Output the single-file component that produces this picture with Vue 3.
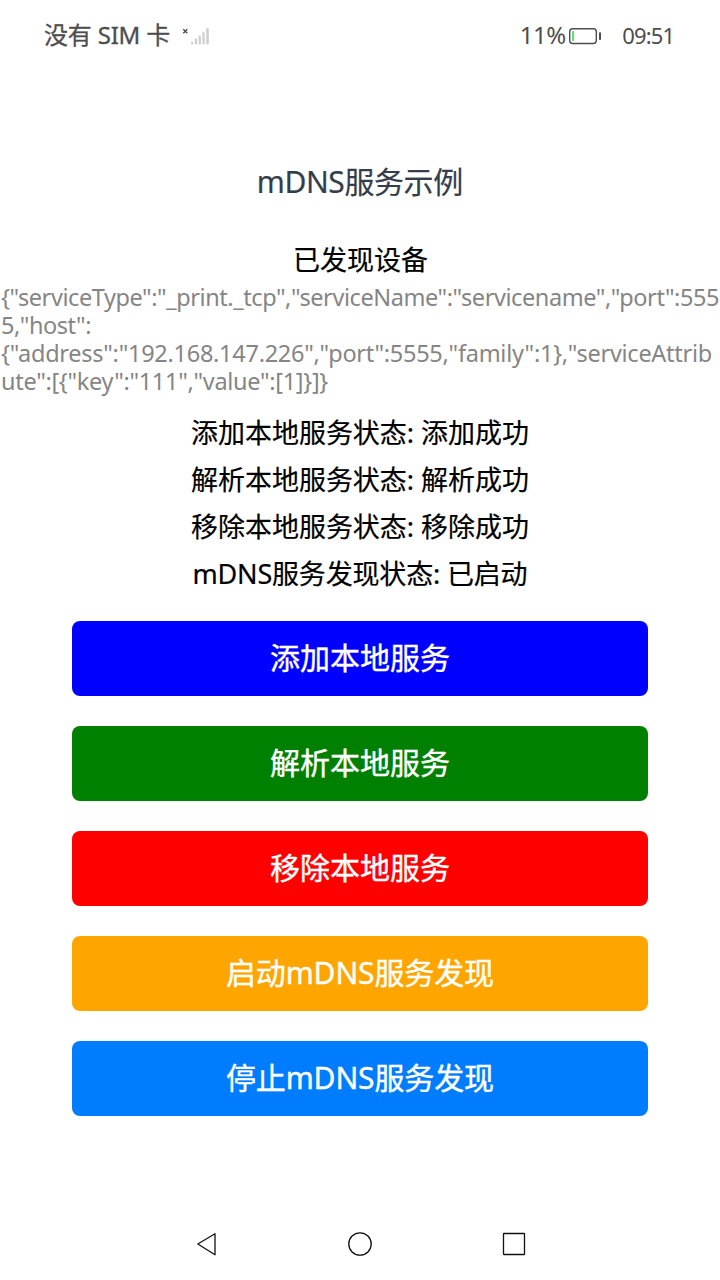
<script setup>
const jsonLines = [
  { text: '{"serviceType":"_print._tcp","serviceName":"servicename","port":555', width: 718 },
  { text: '5,"host":', width: 90 },
  { text: '{"address":"192.168.147.226","port":5555,"family":1},"serviceAttrib', width: 711 },
  { text: 'ute":[{"key":"111","value":[1]}]}', width: 327 }
]
const statuses = [
  { text: '添加本地服务状态: 添加成功', width: 338 },
  { text: '解析本地服务状态: 解析成功', width: 338 },
  { text: '移除本地服务状态: 移除成功', width: 338 },
  { text: 'mDNS服务发现状态: 已启动', width: 335 }
]
const buttons = [
  { text: '添加本地服务', color: '#0000ff', width: 180 },
  { text: '解析本地服务', color: '#008000', width: 180 },
  { text: '移除本地服务', color: '#ff0000', width: 180 },
  { text: '启动mDNS服务发现', color: '#ffa500', width: 268 },
  { text: '停止mDNS服务发现', color: '#007dff', width: 268 }
]

// Spreads the letters of a line so that it takes up the given width.
const vFit = {
  mounted(el, binding) {
    el.style.letterSpacing = '0px'
    const natural = el.getBoundingClientRect().width
    const space = (binding.value - natural) / el.textContent.length
    el.style.letterSpacing = space + 'px'
    el.style.marginRight = -space + 'px'
  }
}
</script>

<template>
  <div class="screen">
    <header class="status-bar">
      <span v-fit="126" class="carrier">没有 SIM 卡</span>
      <svg class="signal" width="28" height="20" viewBox="0 0 28 20">
        <path d="M1.3 3.2l4 4M5.3 3.2l-4 4" stroke="#4d4d4d" stroke-width="1.4" fill="none" />
        <g fill="#cfcfcf">
          <rect x="9" y="15.6" width="2.2" height="3" rx="1" />
          <rect x="12.8" y="12.6" width="2.3" height="6" rx="1" />
          <rect x="16.6" y="9.4" width="2.3" height="9.2" rx="1" />
          <rect x="20.4" y="6" width="2.3" height="12.6" rx="1" />
          <rect x="24.2" y="2" width="2.6" height="16.6" rx="1" />
        </g>
      </svg>
      <span class="spacer"></span>
      <span v-fit="46" class="percent">11%</span>
      <svg class="battery" width="34" height="18" viewBox="0 0 34 18">
        <rect x="1.7" y="1.7" width="26.6" height="14.8" rx="3" fill="none" stroke="#4d4d4d" stroke-width="1.4" />
        <rect x="4" y="4" width="2.2" height="10.2" rx="0.8" fill="#6fdc7b" />
        <rect x="31" y="5.2" width="2" height="7.8" rx="0.8" fill="#4d4d4d" />
      </svg>
      <span v-fit="52" class="clock">09:51</span>
    </header>

    <h1 class="title"><span v-fit="206">mDNS服务示例</span></h1>
    <h2 class="found">已发现设备</h2>
    <div class="json">
      <div v-for="line in jsonLines" :key="line.text" class="json-line">
        <span v-fit="line.width">{{ line.text }}</span>
      </div>
    </div>
    <div class="statuses">
      <div v-for="s in statuses" :key="s.text" class="status"><span v-fit="s.width">{{ s.text }}</span></div>
    </div>
    <div class="buttons">
      <button v-for="b in buttons" :key="b.text" class="button" :style="{ backgroundColor: b.color }">
        <span v-fit="b.width">{{ b.text }}</span>
      </button>
    </div>

    <nav class="nav">
      <svg width="26" height="26" viewBox="0 0 26 26"><path d="M3.8 13L21 2.8v21z" /></svg>
      <svg width="26" height="26" viewBox="0 0 26 26"><circle cx="13" cy="13" r="11.2" /></svg>
      <svg width="26" height="26" viewBox="0 0 26 26"><rect x="2.5" y="2.5" width="21" height="21" rx="0.4" /></svg>
    </nav>
  </div>
</template>

<style>
body {
  background: #fff;
}
</style>

<style scoped>
.screen {
  width: 720px;
  height: 1280px;
  box-sizing: border-box;
  overflow: hidden;
  display: flex;
  flex-direction: column;
  background: #fff;
  color: #000;
  font-family: "Noto Sans", "Noto Sans CJK SC", sans-serif;
  white-space: nowrap;
}
.status-bar {
  flex: none;
  display: flex;
  align-items: center;
  height: 72px;
  padding: 0 45px 2px 44px;
  box-sizing: border-box;
  color: #4d4d4d;
  line-height: 32px;
}
.carrier {
  font-size: 24px;
  -webkit-text-stroke: 0.3px currentColor;
}
.signal {
  margin: 2px 0 0 12px;
}
.spacer {
  flex: 1;
}
.percent {
  font-size: 24px;
}
.battery {
  margin: 2px 0 0 2px;
}
.clock {
  margin-left: 20px;
  font-size: 22px;
}
.title {
  flex: none;
  margin: 92px 0 0;
  height: 36px;
  line-height: 36px;
  font-size: 30px;
  font-weight: 400;
  text-align: center;
  color: #343e4a;
  -webkit-text-stroke: 0.2px currentColor;
}
.found {
  flex: none;
  margin: 42px 0 0 1px;
  height: 36px;
  line-height: 36px;
  font-size: 27px;
  font-weight: 400;
  text-align: center;
}
.json {
  flex: none;
  margin: 5px 0 0 1px;
  font-size: 23.5px;
  color: #858585;
}
.json-line {
  height: 28px;
  line-height: 28px;
}
.json-line span {
  display: inline-block;
  height: 28px;
  vertical-align: top;
}
.statuses {
  flex: none;
  margin-top: 14px;
  font-size: 27px;
  text-align: center;
}
.status {
  height: 47px;
  line-height: 47px;
}
.found,
.statuses {
  -webkit-text-stroke: 0.2px currentColor;
}
.buttons {
  flex: none;
  display: flex;
  flex-direction: column;
  gap: 30px;
  margin: 24px 72px 0;
}
.button {
  display: flex;
  align-items: center;
  justify-content: center;
  height: 75px;
  padding: 0 0 2px;
  border: 0;
  border-radius: 8px;
  color: #fff;
  font-family: inherit;
  font-size: 30px;
  line-height: 40px;
  -webkit-text-stroke: 0.4px currentColor;
}
.nav {
  display: flex;
  justify-content: space-between;
  margin: 115px 193.5px 0 194px;
}
.nav svg {
  fill: none;
  stroke: #111;
  stroke-width: 1.3;
  stroke-linejoin: round;
}
</style>
